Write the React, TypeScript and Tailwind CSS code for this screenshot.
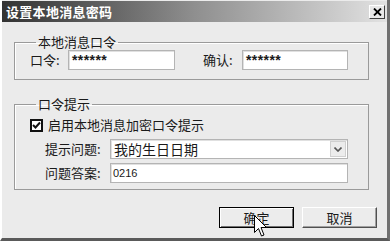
import React from 'react';

const inputBox = 'h-[20px] bg-white border border-[#b4b4b4] shadow-[inset_1px_1px_0_#e0e0e0]';
const stars = "flex items-center pl-[3px] font-['Liberation_Sans',sans-serif] font-bold text-[14px] tracking-[0.4px]";

function CloseButton() {
  return (
    <div className="w-[16px] h-[14px] bg-[#e8e8e8] border-t border-l border-t-white border-l-white border-r border-b border-r-[#404040] border-b-[#404040] flex items-center justify-center">
      <svg width="9" height="8" viewBox="0 0 9 8">
        <path d="M1 0.5 L8 7.5 M8 0.5 L1 7.5" stroke="#000" strokeWidth="1.8" />
      </svg>
    </div>
  );
}

function Checkbox() {
  return (
    <div className="w-[13px] h-[13px] border-2 border-[#111] bg-white flex items-center justify-center">
      <svg width="9" height="9" viewBox="0 0 9 9">
        <path d="M1 4 L3.5 6.5 L8 1.5" stroke="#111" strokeWidth="2" fill="none" />
      </svg>
    </div>
  );
}

function Cursor() {
  return (
    <svg className="absolute left-[252px] top-[215px]" width="14" height="24" viewBox="0 0 14 24">
      <path
        d="M0.5 0.5 L0.5 17.5 L4.5 13.5 L7.5 21 L10 20 L7 12.5 L12.5 12.5 Z"
        fill="#fff"
        stroke="#000"
        strokeWidth="1"
      />
    </svg>
  );
}

export default function App() {
  return (
    <div className="relative w-[390px] h-[241px] overflow-hidden bg-[#ebebeb] border-l-2 border-l-white border-r-[3px] border-r-[#707070] border-b-[3px] border-b-[#5a5a5a] flex flex-col font-['Noto_Sans_CJK_SC',sans-serif] text-[12px] text-[#1a1a1a]">
      {/* title bar */}
      <div className="h-[21px] mt-[1px] bg-gradient-to-r from-[#333333] via-[#8f8f8f] to-[#e2e2e2] flex items-center justify-between pl-[4px] pr-[2px]">
        <span className="text-white font-bold text-[13px] leading-none tracking-[0.3px]">设置本地消息密码</span>
        <CloseButton />
      </div>

      <div className="flex flex-col pl-[12px] pr-[18px]">
        {/* group 1 */}
        <fieldset className="mt-[13px] h-[45px] border border-[#9a9a9a] shadow-[inset_1px_1px_0_#fff] pl-[15px] pr-[20px]">
          <legend className="ml-[6px] px-[2px] text-[13px] leading-[14px]">本地消息口令</legend>
          <div className="flex items-center mt-[1px]">
            <span className="w-[38px] text-[13px]">口令:</span>
            <div className={`${inputBox} w-[107px] ${stars}`}>******</div>
            <span className="ml-[28px] w-[39px] text-[13px]">确认:</span>
            <div className={`${inputBox} w-[106px] ${stars}`}>******</div>
          </div>
        </fieldset>

        {/* group 2 */}
        <fieldset className="mt-[17px] h-[93px] border border-[#9a9a9a] shadow-[inset_1px_1px_0_#fff] pl-[15px] pr-[20px]">
          <legend className="ml-[6px] px-[2px] text-[13px] leading-[14px]">口令提示</legend>
          <div className="flex items-center gap-[5px] mt-[7px]">
            <Checkbox />
            <span className="text-[13px] leading-[14px]">启用本地消息加密口令提示</span>
          </div>
          <div className="flex items-center mt-[7px] pl-[15px]">
            <span className="w-[65px] text-[13px]">提示问题:</span>
            <div className={`${inputBox} flex-1 flex items-center justify-between pl-[3px] pr-[1px]`}>
              <span className="text-[14px] leading-none">我的生日日期</span>
              <div className="w-[16px] h-[16px] bg-[#ececec] border border-[#d0d0d0] flex items-center justify-center">
                <svg width="8" height="5" viewBox="0 0 8 5">
                  <path d="M0.5 0.5 L4 4 L7.5 0.5" stroke="#555" strokeWidth="1.6" fill="none" />
                </svg>
              </div>
            </div>
          </div>
          <div className="flex items-center mt-[4px] pl-[15px]">
            <span className="w-[65px] text-[13px]">问题答案:</span>
            <div className={`${inputBox} flex-1 flex items-center pl-[2px] font-['Liberation_Sans',sans-serif] text-[11px]`}>0216</div>
          </div>
        </fieldset>

        {/* buttons */}
        <div className="flex justify-end gap-[8px] mt-[17px] -mr-[8px]">
          <button className="w-[75px] h-[21px] border border-black bg-[#ececec] shadow-[inset_1px_1px_0_#fff,inset_-1px_-1px_0_#707070] text-[13px] leading-none">
            确定
          </button>
          <button className="w-[75px] h-[21px] bg-[#ececec] border-t border-l border-t-white border-l-white border-r border-b border-r-[#505050] border-b-[#505050] shadow-[inset_-1px_-1px_0_#a0a0a0] text-[13px] leading-none">
            取消
          </button>
        </div>
      </div>
      <Cursor />
    </div>
  );
}
